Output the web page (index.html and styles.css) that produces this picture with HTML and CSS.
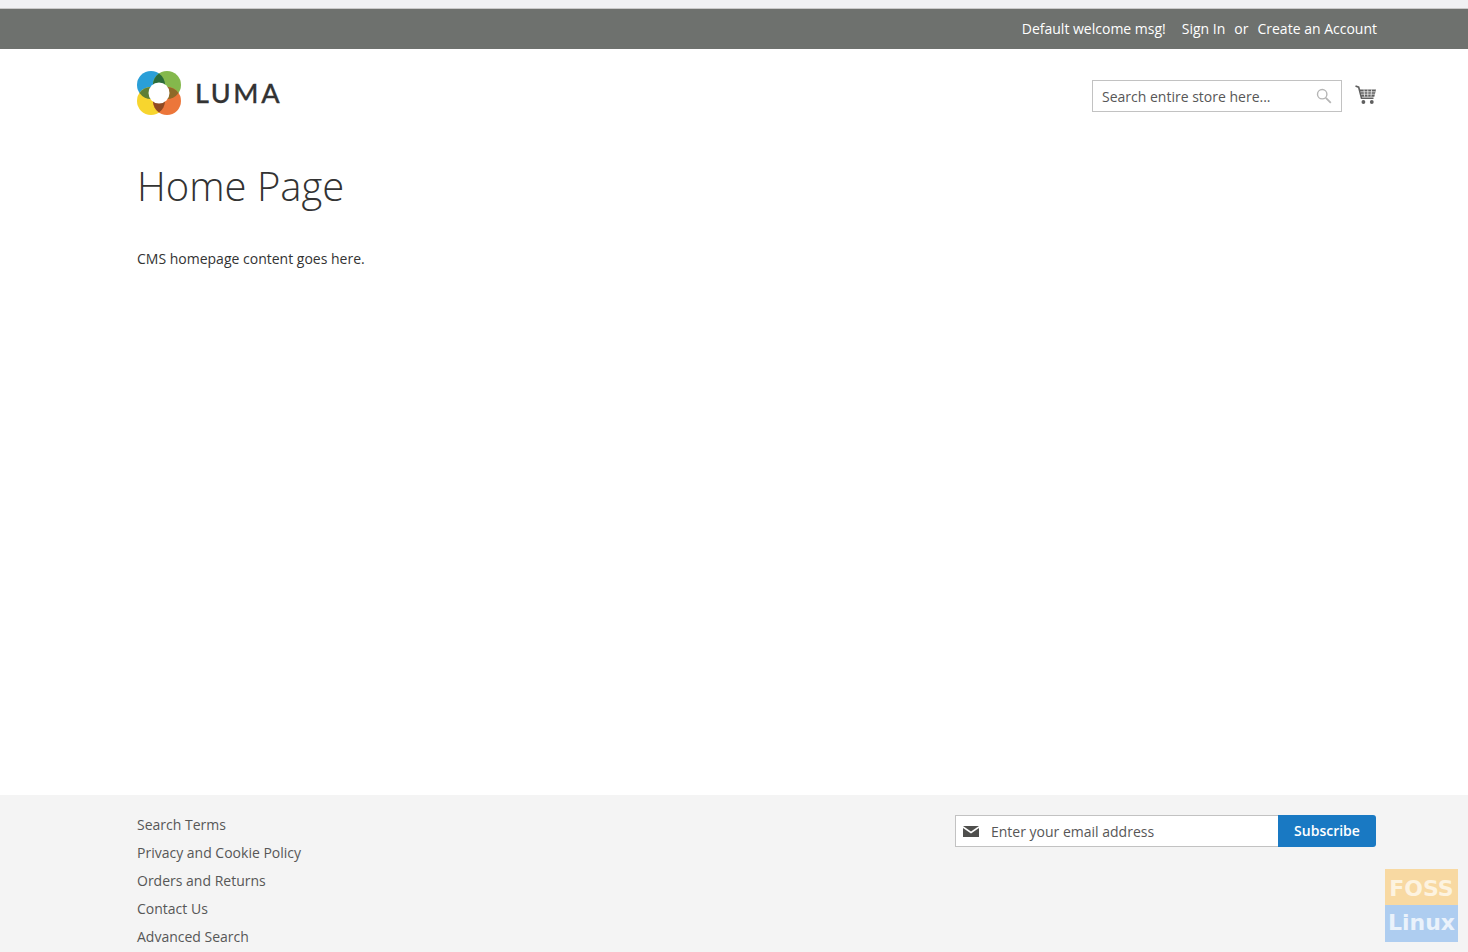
FILE: index.html
```html
<!DOCTYPE html>
<html lang="en">
<head>
<meta charset="utf-8">
<title>Home Page</title>
<link rel="stylesheet" href="styles.css">
</head>
<body>
<div class="page">
  <div class="browser-strip"></div>
  <div class="panel">
    <div class="wrap panel-links">
      <span class="welcome">Default welcome msg!</span>
      <a href="#">Sign In</a>
      <span class="or">or</span>
      <a href="#">Create an Account</a>
    </div>
  </div>
  <header class="wrap header">
    <a class="logo" href="#">
      <svg class="logo-mark" width="44" height="44" viewBox="0 0 44 44" aria-hidden="true">
        <circle cx="14" cy="14" r="14" fill="#2a9fd8"/>
        <circle cx="30" cy="14" r="14" fill="#84b84c"/>
        <circle cx="14" cy="30" r="14" fill="#f7d52e"/>
        <circle cx="30" cy="30" r="14" fill="#ec763a"/>
        <path d="M22 2.51A14 14 0 0 1 22 25.49A14 14 0 0 1 22 2.51z" fill="#2c6c3a"/>
        <path d="M22 18.51A14 14 0 0 1 22 41.49A14 14 0 0 1 22 18.51z" fill="#8f4a22"/>
        <path d="M2.51 22A14 14 0 0 1 25.49 22A14 14 0 0 1 2.51 22z" fill="#5f7f35"/>
        <path d="M18.51 22A14 14 0 0 1 41.49 22A14 14 0 0 1 18.51 22z" fill="#8e6a28"/>
        <circle cx="22" cy="22" r="10.5" fill="#fff"/>
      </svg>
      <span class="logo-text">LUMA</span>
    </a>
    <div class="header-tools">
      <div class="search">
        <span class="search-text">Search entire store here...</span>
        <svg class="search-icon" width="16" height="16" viewBox="0 0 16 16" aria-hidden="true">
          <circle cx="6.2" cy="6.2" r="4.7" fill="none" stroke="#b5b5b5" stroke-width="1.4"/>
          <path d="M9.8 9.8l5 5" stroke="#b5b5b5" stroke-width="1.8" fill="none"/>
        </svg>
      </div>
      <svg class="cart" width="22" height="20" viewBox="0 0 22 20" aria-hidden="true">
        <path d="M0.5 1l3.2 1.2 2.8 11h12" fill="none" stroke="#5f5f5f" stroke-width="1.6"/>
        <path d="M4.6 4.5h16.4l-1.7 7.2H6.5z" fill="#5f5f5f"/>
        <path d="M5.5 6.8h15M6 9.2h14M9 4.5l.6 7.2M12.8 4.5v7.2M16.6 4.5l-.6 7.2" stroke="#fff" stroke-width=".7" fill="none"/>
        <circle cx="8.4" cy="17" r="1.9" fill="#5f5f5f"/>
        <circle cx="16.8" cy="17" r="1.9" fill="#5f5f5f"/>
      </svg>
    </div>
  </header>
  <main class="wrap main">
    <h1 class="title">Home Page</h1>
    <p class="cms">CMS homepage content goes here.</p>
  </main>
  <footer class="footer">
    <div class="wrap footer-inner">
      <ul class="footer-links">
        <li><a href="#">Search Terms</a></li>
        <li><a href="#">Privacy and Cookie Policy</a></li>
        <li><a href="#">Orders and Returns</a></li>
        <li><a href="#">Contact Us</a></li>
        <li><a href="#">Advanced Search</a></li>
      </ul>
      <form class="newsletter">
        <div class="email">
          <svg class="mail" width="16" height="11" viewBox="0 0 16 11" aria-hidden="true">
            <path d="M0 0h16L8 5.6z" fill="#4f4f4d"/>
            <path d="M0 2l8 5.4L16 2v9H0z" fill="#4f4f4d"/>
          </svg>
          <span class="email-text">Enter your email address</span>
        </div>
        <span class="subscribe">Subscribe</span>
      </form>
    </div>
  </footer>
  <div class="watermark">
    <span class="wm-foss">FOSS</span>
    <span class="wm-linux">Linux</span>
  </div>
</div>
</body>
</html>
```
FILE: styles.css
```css
html, body {
  margin: 0;
  padding: 0;
}
body {
  font-family: "Open Sans", "Liberation Sans", sans-serif;
  font-size: 14px;
  color: #333;
  background: #fff;
}
a {
  color: inherit;
  text-decoration: none;
}
.page {
  position: relative;
  height: 952px;
  overflow: hidden;
  display: flex;
  flex-direction: column;
}
.wrap {
  padding-left: 137px;
  padding-right: 91px;
}
.browser-strip {
  height: 8px;
  background: #f0f1f3;
  border-bottom: 1px solid #c9c9c9;
}
.panel {
  height: 40px;
  background: #6e716e;
  color: #fff;
}
.panel-links {
  height: 100%;
  display: flex;
  justify-content: flex-end;
  align-items: center;
  padding-bottom: 2px;
  box-sizing: border-box;
  font-size: 14px;
}
.welcome {
  margin-right: 16px;
}
.or {
  margin: 0 9px 0 9px;
}
.header {
  display: flex;
  justify-content: space-between;
  height: 85px;
}
.logo {
  display: flex;
  align-items: center;
  height: 44px;
  margin-top: 22px;
}
.logo-mark {
  display: block;
}
.logo-text {
  margin-left: 14px;
  font-family: Lato, "Liberation Sans", sans-serif;
  font-size: 27px;
  font-weight: 500;
  letter-spacing: 2.6px;
  color: #333;
  line-height: 44px;
  -webkit-text-stroke: 0.3px #333;
}
.header-tools {
  display: flex;
  align-items: flex-start;
  padding-top: 31px;
}
.search {
  width: 250px;
  height: 32px;
  box-sizing: border-box;
  border: 1px solid #c2c2c2;
  display: flex;
  align-items: center;
  justify-content: space-between;
  padding: 0 9px 0 9px;
  color: #575757;
}
.search-icon {
  display: block;
}
.cart {
  margin: 5px 0 0 13px;
  display: block;
}
.main {
  flex: 1;
}
.title {
  margin: 0;
  padding-top: 27px;
  font-size: 40px;
  font-weight: 300;
  line-height: 50px;
  color: #333;
}
.cms {
  margin: 38px 0 0;
  line-height: 20px;
}
.footer {
  height: 157px;
  background: #f4f4f4;
  color: #575757;
}
.footer-inner {
  display: flex;
  justify-content: space-between;
  align-items: flex-start;
  padding-top: 17px;
}
.footer-links {
  list-style: none;
  margin: 0;
  padding: 0;
  display: flex;
  flex-direction: column;
  gap: 8px;
}
.footer-links li {
  line-height: 20px;
  height: 20px;
  padding-top: 3px;
  margin-bottom: -3px;
}
.newsletter {
  display: flex;
  margin: 3px 1px 0 0;
}
.email {
  width: 323px;
  height: 32px;
  box-sizing: border-box;
  background: #fff;
  border: 1px solid #c2c2c2;
  border-right: 0;
  display: flex;
  align-items: center;
  padding-left: 7px;
  color: #575757;
}
.mail {
  display: block;
  margin-right: 12px;
}
.subscribe {
  width: 98px;
  height: 32px;
  box-sizing: border-box;
  padding-bottom: 2px;
  background: #1979c3;
  color: #fff;
  font-weight: 600;
  display: flex;
  align-items: center;
  justify-content: center;
  border-radius: 0 3px 3px 0;
}
.watermark {
  position: absolute;
  left: 1385px;
  top: 869px;
  width: 73px;
  display: flex;
  flex-direction: column;
  font-family: "DejaVu Sans", sans-serif;
  font-weight: 700;
  font-size: 22px;
  text-align: center;
}
.wm-foss {
  height: 36px;
  line-height: 39px;
  background: #f8d9a2;
  color: #fdf3e0;
}
.wm-linux {
  height: 37px;
  line-height: 36px;
  background: #aecdf0;
  color: #eaf2fb;
}
```
